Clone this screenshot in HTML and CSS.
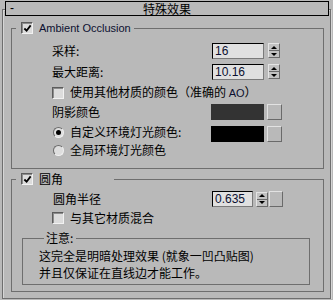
FILE: index.html
```html
<!DOCTYPE html>
<html lang="zh-CN">
<head>
    <meta charset="UTF-8">
    <title>特殊效果</title>
    <link rel="stylesheet" href="styles.css">
</head>
<body>

    <div class="rollout">
        <div class="rollout-head">
            <span class="toggle">-</span>
            <span class="title">特殊效果</span>
            <span></span>
        </div>

        <!-- Ambient Occlusion -->
        <fieldset class="group group-ao">
            <legend class="group-title ao-title">
                <span class="legend-inner">
                    <span class="check on"><svg viewBox="0 0 10 10"><path d="M1.5 5 L4 7.5 L8.5 1.5"/></svg></span>
                    <span class="latin">Ambient Occlusion</span>
                </span>
            </legend>

            <div class="row row-a">
                <span class="field-label">采样:</span>
                <span class="num">16</span>
                <span class="spinner"><i class="up"></i><i class="down"></i></span>
            </div>
            <div class="row row-a">
                <span class="field-label">最大距离:</span>
                <span class="num">10.16</span>
                <span class="spinner"><i class="up"></i><i class="down"></i></span>
            </div>
            <div class="row row-a">
                <span class="check"></span>
                <span class="opt-label">使用其他材质的颜色（准确的 <span class="latin">AO</span>）</span>
            </div>
            <div class="row row-b">
                <span class="field-label">阴影颜色</span>
                <span class="swatch swatch-shadow"></span>
                <span class="sq-btn"></span>
            </div>
            <div class="row row-c">
                <span class="radio on"></span>
                <span class="opt-label radio-label">自定义环境灯光颜色:</span>
                <span class="swatch swatch-black"></span>
                <span class="sq-btn"></span>
            </div>
            <div class="row row-d">
                <span class="radio"></span>
                <span class="opt-label">全局环境灯光颜色</span>
            </div>
        </fieldset>

        <!-- 圆角 -->
        <fieldset class="group group-round">
            <legend class="group-title round-title">
                <span class="legend-inner">
                    <span class="check on"><svg viewBox="0 0 10 10"><path d="M1.5 5 L4 7.5 L8.5 1.5"/></svg></span>
                    <span>圆角</span>
                </span>
            </legend>

            <div class="row row-e">
                <span class="field-label">圆角半径</span>
                <span class="num num-small">0.635</span>
                <span class="spinner spinner-tight"><i class="up"></i><i class="down"></i></span>
                <span class="sq-btn sq-small"></span>
            </div>
            <div class="row row-f">
                <span class="check"></span>
                <span class="opt-label">与其它材质混合</span>
            </div>

            <fieldset class="group group-note">
                <legend class="note-title">注意:</legend>
                <p class="note-text">这完全是明暗处理效果 (就象一凹凸贴图)<br>并且仅保证在直线边才能工作。</p>
            </fieldset>
        </fieldset>
    </div>

</body>
</html>
```

FILE: styles.css
```css
/* base */
* {
    margin: 0;
    padding: 0;
    box-sizing: border-box;
}

body {
    font-family: "Noto Sans CJK SC", "Liberation Sans", sans-serif;
    font-size: 12px;
    background-color: #b9b9b9;
    color: #000;
}

.latin {
    font-family: "Liberation Sans", "Noto Sans CJK SC", sans-serif;
    font-size: 11px;
    color: #0c1030;
}

/* rollout frame */
.rollout {
    margin: 9px 2px 0 2px;
    border: 1px solid #6e6e6e;
    box-shadow: inset 1px 1px 0 #d6d6d6, 1px 1px 0 #d6d6d6;
    padding-bottom: 6px;
}

.rollout-head {
    margin: -9px 1px 0 2px;
    height: 15px;
    border: 1px solid #000;
    background-color: #b9b9b9;
    display: grid;
    grid-template-columns: 1fr auto 1fr;
    align-items: center;
    line-height: 13px;
}

.toggle {
    padding-left: 4px;
    font-family: "Liberation Sans", sans-serif;
}

/* group boxes */
.group {
    border: 1px solid #6e6e6e;
    min-width: 0;
}

.group-ao {
    margin: 5px 6px 0 8px;
    padding: 5px 0 11px 0;
}

.group-ao .row {
    padding-left: 40px;
}

.group-round {
    margin: 3px 6px 0 8px;
    padding: 3px 0 6px 0;
}

.group-title {
    margin-left: 4px;
    padding: 0;
    height: 14px;
    line-height: 14px;
    white-space: nowrap;
}

.ao-title {
    width: 118px;
}

.round-title {
    width: 98px;
}

.legend-inner {
    display: flex;
    align-items: center;
    height: 14px;
    padding-left: 5px;
    gap: 6px;
}

/* rows */
.row {
    display: flex;
    align-items: center;
}

.row-a { height: 21px; }
.row-b { height: 18px; }
.row-c { height: 22px; }
.row-d { height: 14px; }
.row-e { height: 20px; padding-left: 41px; }
.row-f { height: 17px; padding-left: 40px; }

.field-label {
    width: 160px;
    line-height: 14px;
}

.row-e .field-label {
    width: 159px;
}

.opt-label {
    margin-left: 6px;
    line-height: 14px;
    white-space: nowrap;
}

.radio-label {
    width: 141px;
}

/* controls */
.num {
    width: 52px;
    height: 16px;
    background-color: #e0e0e0;
    border: 1px solid #000;
    border-right-color: #7a7a7a;
    border-bottom-color: #7a7a7a;
    padding-left: 2px;
    font-family: "Liberation Sans", sans-serif;
    font-size: 12px;
    line-height: 14px;
    color: #0c1030;
}

.num-small {
    width: 41px;
}

.spinner {
    margin-left: 4px;
    width: 12px;
    height: 15px;
    background-color: #c2c2c2;
    border: 1px solid #6a6a6a;
    border-top-color: #e4e4e4;
    border-left-color: #e4e4e4;
    display: flex;
    flex-direction: column;
}

.spinner-tight {
    margin-left: 3px;
}

.spinner i {
    flex: 1;
    display: flex;
    align-items: center;
    justify-content: center;
}

.spinner .up {
    border-bottom: 1px solid #6a6a6a;
}

.spinner .up::after {
    content: "";
    border-left: 3px solid transparent;
    border-right: 3px solid transparent;
    border-bottom: 3px solid #000;
}

.spinner .down::after {
    content: "";
    border-left: 3px solid transparent;
    border-right: 3px solid transparent;
    border-top: 3px solid #000;
}

.swatch {
    width: 53px;
    height: 16px;
    margin-left: -1px;
}

.swatch-shadow {
    background-color: #333;
}

.swatch-black {
    background-color: #000;
    margin-left: 0;
    margin-top: 4px;
}

.sq-btn {
    margin-left: 3px;
    width: 15px;
    height: 16px;
    border: 1px solid #6a6a6a;
    border-top-color: #e2e2e2;
    border-left-color: #e2e2e2;
}

.row-c .sq-btn {
    margin-top: 4px;
}

.sq-small {
    margin-left: 1px;
    width: 14px;
}

.check {
    width: 12px;
    height: 12px;
    flex: none;
    background-color: #dcdcdc;
    border: 1px solid #f2f2f2;
    border-top-color: #5c5c5c;
    border-left-color: #5c5c5c;
    box-shadow: inset 1px 1px 0 #8c8c8c;
    display: flex;
    align-items: center;
    justify-content: center;
}

.check svg {
    width: 9px;
    height: 9px;
}

.check path {
    fill: none;
    stroke: #000;
    stroke-width: 2;
}

.radio {
    margin-left: 1px;
    width: 11px;
    height: 11px;
    flex: none;
    border-radius: 50%;
    background-color: #dedede;
    border: 1px solid #f0f0f0;
    border-top-color: #6a6a6a;
    border-left-color: #6a6a6a;
    display: flex;
    align-items: center;
    justify-content: center;
}

.radio.on::after {
    content: "";
    width: 5px;
    height: 5px;
    border-radius: 50%;
    background-color: #000;
}

.row-d .opt-label,
.row-c .opt-label {
    margin-left: 6px;
}

/* note box */
.group-note {
    margin: 5px 13px 0 10px;
    padding: 2px 0 3px 16px;
}

.note-title {
    margin-left: 5px;
    padding: 0 2px;
    width: 32px;
    height: 14px;
    line-height: 14px;
}

.note-text {
    line-height: 17px;
}
```
